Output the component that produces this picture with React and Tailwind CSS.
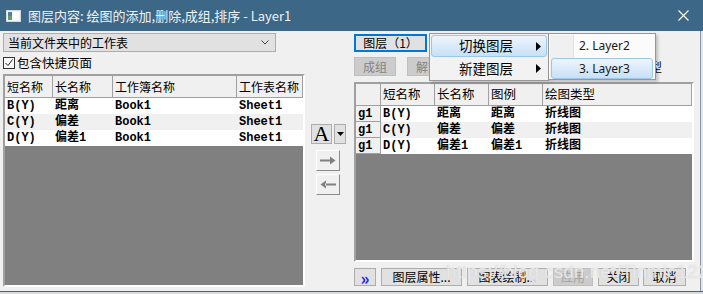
import React from "react";

const leftRows = [
  ["B(Y)", "距离", "Book1", "Sheet1"],
  ["C(Y)", "偏差", "Book1", "Sheet1"],
  ["D(Y)", "偏差1", "Book1", "Sheet1"],
];
const rightRows = [
  ["g1", "B(Y)", "距离", "距离", "折线图"],
  ["g1", "C(Y)", "偏差", "偏差", "折线图"],
  ["g1", "D(Y)", "偏差1", "偏差1", "折线图"],
];
const leftW = ["w-[48px]", "w-[60px]", "w-[124px]", "w-[66px]"];
const rightW = ["w-[54px]", "w-[54px]", "w-[54px]", "flex-1"];

function Tri() {
  return (
    <svg width="6" height="9" viewBox="0 0 6 9" className="block">
      <path d="M0 0 L5 4.5 L0 9 Z" fill="#000" />
    </svg>
  );
}

export default function App() {
  return (
    <div className="relative w-[703px] h-[294px] overflow-hidden bg-[#f0f0f0] font-['Noto_Sans_CJK_SC',sans-serif] text-black">
      {/* Title bar */}
      <div className="h-[31px] bg-[#3c6787] flex items-center">
        <svg className="ml-[6px] block" width="15" height="12" viewBox="0 0 15 12">
          <rect x="0.5" y="0.5" width="14" height="11" fill="#f4f4f4" stroke="#d8d8d8" />
          <rect x="2" y="2" width="4" height="8" fill="#4f7fa6" />
          <rect x="2" y="6" width="4" height="4" fill="#5aa36a" />
          <rect x="7" y="2" width="6" height="8" fill="#ffffff" />
        </svg>
        <span className="ml-[7px] text-[13px] leading-none text-[#eef3f7]">
          图层内容: 绘图的添加,删除,成组,排序 - Layer1
        </span>
        <svg className="ml-auto mr-[14px] block" width="11" height="11" viewBox="0 0 11 11">
          <path d="M0.5 0.5 L10.5 10.5 M10.5 0.5 L0.5 10.5" stroke="#ffffff" strokeWidth="1.1" />
        </svg>
      </div>

      {/* Body */}
      <div className="flex h-[260px]">
        {/* Left column */}
        <div className="w-[305px] pl-[3px] pb-[4px] flex flex-col">
          <div className="mt-[2px] h-[19px] bg-[#e1e1e1] border border-[#adadad] flex items-center pl-[4px] pr-[6px] w-[273px]">
            <span className="text-[12px] leading-none">当前文件夹中的工作表</span>
            <svg className="ml-auto block" width="8" height="5" viewBox="0 0 8 5">
              <path d="M0.5 0.5 L4 4 L7.5 0.5" stroke="#444" fill="none" strokeWidth="1" />
            </svg>
          </div>
          <div className="mt-[3px] h-[16px] flex items-center">
            <div className="w-[12px] h-[12px] border border-[#333] bg-[#f8f8f8] flex items-center justify-center">
              <svg width="10" height="10" viewBox="0 0 10 10" className="block">
                <path d="M1.5 5 L4 7.5 L8.5 1.5" stroke="#222" fill="none" strokeWidth="1" />
              </svg>
            </div>
            <span className="ml-[2px] text-[12.5px] leading-none">包含快捷页面</span>
          </div>
          <div className="mt-[3px] flex-1 border-2 border-t-[#a0a0a0] border-l-[#a0a0a0] border-r-[#ffffff] border-b-[#ffffff] bg-[#808080] flex flex-col">
            <div className="h-[22px] flex bg-[#f0f0f0]">
              {["短名称", "长名称", "工作簿名称", "工作表名称"].map((h, i) => (
                <div
                  key={h}
                  className={`${leftW[i]} h-full border-r border-b border-[#a0a0a0] flex items-center pl-[2px] text-[12px] leading-none overflow-hidden whitespace-nowrap`}
                >
                  {h}
                </div>
              ))}
            </div>
            {leftRows.map((r, ri) => (
              <div
                key={ri}
                className={`h-[16px] flex ${ri === 1 ? "bg-[#f0f0f0]" : "bg-[#ffffff]"} font-bold font-['Liberation_Mono','Noto_Sans_CJK_SC',monospace] text-[12px] leading-none`}
              >
                {r.map((c, ci) => (
                  <div key={ci} className={`${leftW[ci]} h-full flex items-center pl-[2px]`}>
                    {c}
                  </div>
                ))}
              </div>
            ))}
          </div>
        </div>

        {/* Middle column */}
        <div className="w-[49px] flex flex-col pt-[93px]">
          <div className="flex ml-[6px]">
            <div className="w-[21px] h-[20px] bg-[#e1e1e1] border border-[#adadad] flex items-center justify-center font-['Liberation_Serif',serif] text-[22px] leading-none">
              A
            </div>
            <div className="ml-[2px] w-[12px] h-[20px] bg-[#e1e1e1] border border-[#adadad] flex items-center justify-center">
              <svg width="7" height="4" viewBox="0 0 7 4" className="block">
                <path d="M0 0 L7 0 L3.5 4 Z" fill="#000" />
              </svg>
            </div>
          </div>
          <div className="ml-[11px] mt-[6px] w-[24px] h-[21px] bg-[#f0f0f0] border border-t-[#ffffff] border-l-[#ffffff] border-r-[#8a8a8a] border-b-[#8a8a8a] flex items-center justify-center">
            <svg width="16" height="9" viewBox="0 0 16 9" className="block">
              <path d="M0 3.5 H11 V5.5 H0 Z M10 0.5 L15.5 4.5 L10 8.5 Z" fill="#808080" />
            </svg>
          </div>
          <div className="ml-[11px] mt-[3px] w-[24px] h-[21px] bg-[#f0f0f0] border border-t-[#ffffff] border-l-[#ffffff] border-r-[#8a8a8a] border-b-[#8a8a8a] flex items-center justify-center">
            <svg width="16" height="9" viewBox="0 0 16 9" className="block">
              <path d="M5 3.5 H16 V5.5 H5 Z M6 0.5 L0.5 4.5 L6 8.5 Z" fill="#808080" />
            </svg>
          </div>
        </div>

        {/* Right column */}
        <div className="w-[340px] flex flex-col pt-[3px] pb-[5px]">
          <div className="h-[18px] w-[73px] border-2 border-[#0078d7] bg-[#e1e1e1] flex items-center justify-center text-[12px] leading-none">
            图层（1）
          </div>
          <div className="mt-[5px] h-[19px] flex items-center">
            <div className="w-[42px] h-full bg-[#cccccc] border border-[#bfbfbf] flex items-center justify-center text-[12px] leading-none text-[#838383]">
              成组
            </div>
            <div className="ml-[11px] w-[42px] h-full bg-[#cccccc] border border-[#bfbfbf] flex items-center justify-center text-[12px] leading-none text-[#838383]">
              解散
            </div>
            <span className="ml-auto mr-[32px] text-[12px] leading-none">排序类型</span>
          </div>
          <div className="mt-[6px] h-[180px] border-2 border-t-[#a0a0a0] border-l-[#a0a0a0] border-r-[#ffffff] border-b-[#ffffff] bg-[#808080] flex flex-col">
            <div className="h-[22px] flex bg-[#f0f0f0]">
              <div className="w-[25px] h-full border-r border-b border-[#a0a0a0]" />
              {["短名称", "长名称", "图例", "绘图类型"].map((h, i) => (
                <div
                  key={h}
                  className={`${rightW[i]} h-full border-r border-b border-[#a0a0a0] flex items-center pl-[2px] text-[12.5px] leading-none`}
                >
                  {h}
                </div>
              ))}
            </div>
            {rightRows.map((r, ri) => (
              <div
                key={ri}
                className={`h-[16px] flex ${ri === 1 ? "bg-[#f0f0f0]" : "bg-[#ffffff]"} font-bold font-['Liberation_Mono','Noto_Sans_CJK_SC',monospace] text-[12px] leading-none`}
              >
                <div className="w-[25px] h-full bg-[#f0f0f0] border-r border-b border-[#a0a0a0] flex items-end pb-[1px] pl-[2px]">
                  {r[0]}
                </div>
                {r.slice(1).map((c, ci) => (
                  <div key={ci} className={`${rightW[ci]} h-full flex items-center pl-[2px]`}>
                    {c}
                  </div>
                ))}
              </div>
            ))}
          </div>
          <div className="mt-[6px] h-[18px] flex text-[12px] leading-none">
            <div className="w-[22px] h-full bg-[#e1e1e1] border border-[#adadad] flex items-center justify-center text-[#1a1aff] text-[17px] font-bold">
              »
            </div>
            <div className="ml-[5px] w-[81px] h-full bg-[#e1e1e1] border border-[#adadad] flex items-center justify-center">
              图层属性...
            </div>
            <div className="ml-[5px] w-[81px] h-full bg-[#e1e1e1] border border-[#adadad] flex items-center justify-center">
              图表绘制...
            </div>
            <div className="ml-[5px] w-[40px] h-full bg-[#cccccc] border border-[#bfbfbf] flex items-center justify-center text-[#a0a0a0]">
              应用
            </div>
            <div className="ml-[5px] w-[41px] h-full bg-[#e1e1e1] border border-[#adadad] flex items-center justify-center">
              关闭
            </div>
            <div className="ml-[4px] w-[43px] h-full bg-[#e1e1e1] border border-[#adadad] flex items-center justify-center">
              取消
            </div>
          </div>
        </div>
        <div className="w-[6px]" />
        <div className="w-[1px] bg-[#8a97a3]" />
        <div className="flex-1 bg-[#e4e7ea]" />
      </div>
      <div className="h-[1px] bg-[#3c6787]" />
      <div className="h-[2px] bg-[#d8dcdf]" />

      {/* Watermark */}
      <div className="absolute left-[446px] top-[262px] text-[19px] leading-none text-[#ffffff]/60 font-['Liberation_Sans',sans-serif] [text-shadow:0_0_1px_#c4c4c4] pointer-events-none">
        https://blog.csdn.net/Tinmic1224
      </div>

      {/* Context menu */}
      <div className="absolute left-[429px] top-[33px] w-[120px] h-[48px] bg-[#f2f2f2] border border-[#979797] shadow-[2px_2px_3px_rgba(0,0,0,0.2)] p-[1px] text-[13.5px] leading-none">
        <div className="h-[22px] rounded-[3px] border border-[#9cc7ea] bg-gradient-to-b from-[#eef5fc] to-[#c8e0f6] flex items-center pl-[27px] pr-[4px]">
          <span>切换图层</span>
          <span className="ml-auto">
            <Tri />
          </span>
        </div>
        <div className="h-[23px] flex items-center pl-[28px] pr-[5px]">
          <span>新建图层</span>
          <span className="ml-auto">
            <Tri />
          </span>
        </div>
      </div>

      {/* Submenu */}
      <div className="absolute left-[548px] top-[33px] w-[108px] h-[47px] bg-[#fbfbfb] border border-[#979797] shadow-[2px_2px_3px_rgba(0,0,0,0.2)] text-[12px] leading-none font-['Noto_Sans',sans-serif]">
        <div className="absolute left-[1px] top-[1px] bottom-[1px] w-[24px] bg-[#f0f0f0] border-r border-[#e2e3e3]" />
        <div className="relative h-[24px] flex items-center pl-[30px] text-[#1a1a1a]">2. Layer2</div>
        <div className="relative mx-[2px] h-[21px] rounded-[3px] border border-[#9cc7ea] bg-gradient-to-b from-[#eef5fc] to-[#c8e0f6] flex items-center pl-[27px] text-[#1a1a1a]">
          3. Layer3
        </div>
      </div>
    </div>
  );
}
